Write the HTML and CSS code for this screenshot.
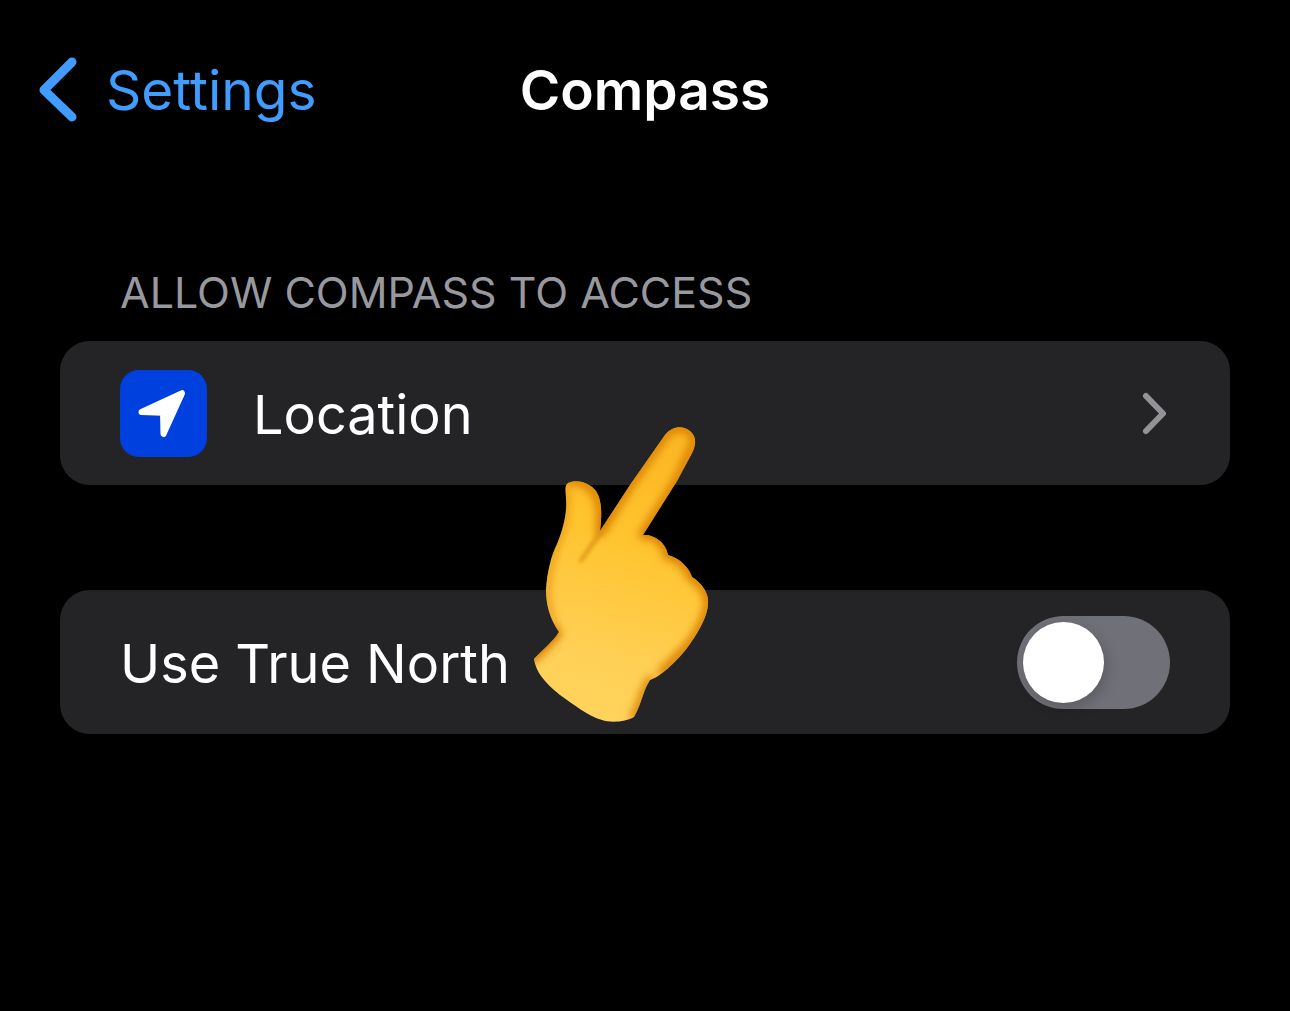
FILE: index.html
```html
<!DOCTYPE html>
<html lang="en">
<head>
<meta charset="utf-8">
<meta name="viewport" content="width=device-width, initial-scale=1">
<title>Compass</title>
<link rel="stylesheet" href="styles.css">
</head>
<body>
<header class="navbar">
  <a class="back" href="#">
    <svg class="back-icon" viewBox="0 0 40 66" aria-hidden="true"><path d="M34 5L6 33L34 60"/></svg>
    <span>Settings</span>
  </a>
  <h1 class="title">Compass</h1>
</header>
<main class="content">
  <h2 class="section-label">ALLOW COMPASS TO ACCESS</h2>
  <a class="card row-link" href="#">
    <svg class="app-icon" viewBox="0 0 87 87" aria-hidden="true">
      <rect width="87" height="87" rx="19" fill="#0040df"/>
      <path d="M21.500 42L62 23.200L43.500 64L43 42.700Z" fill="#fff" stroke="#fff" stroke-width="6" stroke-linejoin="round"/>
    </svg>
    <span class="row-text">Location</span>
    <svg class="chevron" viewBox="0 0 26 44" aria-hidden="true"><path d="M2 5L19 22.500L2 40"/></svg>
  </a>
  <div class="card">
    <label class="row-text" for="true-north">Use True North</label>
    <input class="switch" id="true-north" type="checkbox" role="switch">
  </div>
  <svg class="hand" viewBox="525 420 190 310" aria-hidden="true">
    <defs>
      <linearGradient id="skin" x1="680" y1="430" x2="590" y2="715" gradientUnits="userSpaceOnUse">
        <stop offset="0" stop-color="#fbb622"/>
        <stop offset=".4" stop-color="#ffc42e"/>
        <stop offset=".8" stop-color="#ffd055"/>
        <stop offset="1" stop-color="#ffd35c"/>
      </linearGradient>
      <filter id="soft" x="-20%" y="-20%" width="140%" height="140%"><feGaussianBlur stdDeviation="4"/></filter>
      <filter id="fine" x="-50%" y="-50%" width="200%" height="200%"><feGaussianBlur stdDeviation="2"/></filter>
      <path id="outline" d="M665 435C672 426 683 425 690 431C697 437 696 445 692 453L677 481L643 535C653 534 666 542 668 555C681 559 689 568 692 577C702 583 709 594 708 603C708 617 696 636 687 648C676 662 660 677 650 680C643 690 642 703 634 717C626 722 610 723 602 720C588 716 573 704 560 695C544 682 536 672 534 659C542 650 553 642 559 632C550 619 546 605 546 590C547 573 551 556 557 544C565 525 567 509 566 499C566 492 564 486 568 483C578 478 591 484 596 491C602 500 602 514 600 531L630 485Z"/>
      <clipPath id="shape"><use href="#outline"/></clipPath>
    </defs>
    <use href="#outline" fill="url(#skin)"/>
    <g clip-path="url(#shape)" fill="none" stroke-linecap="round">
      <g filter="url(#soft)" stroke="#d97f00">
        <path d="M601 531L630 485L665 435C674 423 692 426 696 440L677 481L643 535" stroke-width="9"/>
        <path d="M646 534C658 535 667 545 668 555C682 559 690 570 692 577C703 583 709 594 709 603C708 618 696 637 687 648L663 672" stroke-width="10"/>
        <path d="M650 680C643 692 641 705 634 717" stroke-width="8"/>
        <path d="M532 656L554 634" stroke-width="14"/>
        <path d="M570 480C596 481 604 500 600 532" stroke-width="9"/>
        <path d="M559 632C545 613 543 583 557 544C567 522 566 505 566 487" stroke-width="4"/>
      </g>
      <path d="M601 531L597 538L580 562Z" fill="#c87d08" stroke="#d48a10" stroke-width="3" filter="url(#fine)"/>
    </g>
  </svg>
</main>
</body>
</html>
```
FILE: styles.css
```css
* {
  box-sizing: border-box;
}

body {
  margin: 0;
  background: #000;
  color: #fff;
  font-family: Inter, "Liberation Sans", sans-serif;
  font-size: 54px;
  line-height: 72px;
}

a {
  color: inherit;
  text-decoration: none;
}

.navbar {
  display: grid;
  grid-template-columns: 1fr auto 1fr;
  align-items: center;
  padding: 54px 38px 0;
  font-size: 55px;
}

.back {
  display: flex;
  align-items: center;
  gap: 28px;
  color: #409cff;
}

.back-icon {
  width: 40px;
  height: 66px;
  fill: none;
  stroke: currentColor;
  stroke-width: 9px;
  stroke-linecap: round;
  stroke-linejoin: round;
}

.title {
  margin: 0;
  font-size: 55px;
  font-weight: 600;
}

.content {
  position: relative;
  padding: 138px 60px 60px;
}

.section-label {
  margin: 0 60px 21px;
  color: #98989f;
  font-size: 43px;
  font-weight: 400;
  line-height: 56px;
}

.card {
  display: flex;
  align-items: center;
  min-height: 144px;
  padding: 0 60px;
  border-radius: 30px;
  background: #242426;
}

.card + .card {
  margin-top: 105px;
}

.row-link {
  gap: 46px;
}

.row-text {
  flex: 1;
  padding-top: 4px;
}

.app-icon {
  width: 87px;
  height: 87px;
}

.chevron {
  width: 26px;
  height: 44px;
  overflow: visible;
  fill: none;
  stroke: #929297;
  stroke-width: 6px;
  stroke-linecap: round;
  stroke-linejoin: round;
}

.switch {
  appearance: none;
  width: 153px;
  height: 93px;
  margin: 0;
  padding: 6px;
  border-radius: 47px;
  background: #707078;
}

.switch::before {
  content: "";
  display: block;
  width: 81px;
  height: 81px;
  border-radius: 50%;
  background: #fff;
  box-shadow: 3px 5px 14px #00000030;
}

.switch:checked {
  background: #30d158;
}

.switch:checked::before {
  margin-left: 60px;
}

.hand {
  position: absolute;
  top: 294px;
  left: calc(50% - 120px);
  width: 190px;
  height: 310px;
  pointer-events: none;
}
```
